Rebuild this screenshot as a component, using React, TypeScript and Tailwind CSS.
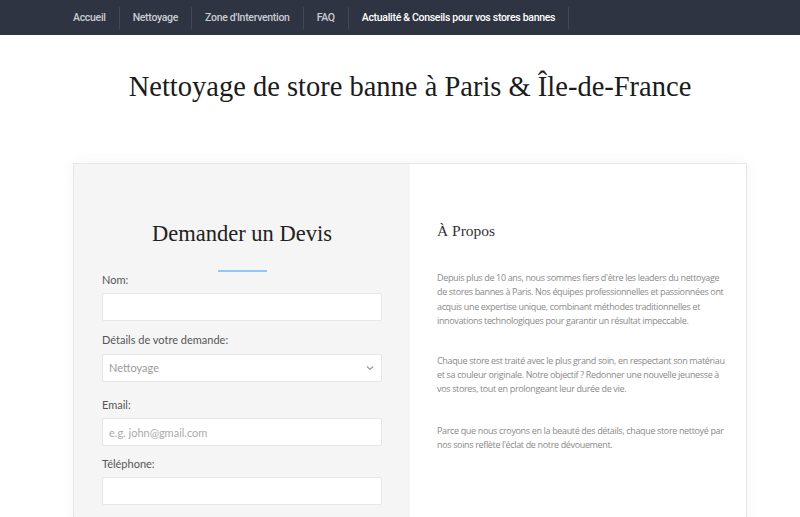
export default function App() {
  const nav = ["Accueil", "Nettoyage", "Zone d'Intervention", "FAQ", "Actualité & Conseils pour vos stores bannes"];
  const serif = "font-['Liberation_Serif',serif]";
  const sans = "font-['Lato',sans-serif]";
  const input =
    "w-full h-[28px] bg-white border border-[#e6e6e6] rounded-[2px] px-[6px] text-[11px] text-[#999] outline-none";

  return (
    <div className="min-h-[517px] bg-white">
      {/* Top nav */}
      <nav className="h-[35px] bg-[#2e3441] flex items-center pl-[60px] font-['Roboto',sans-serif] text-[10.5px] font-medium tracking-[-0.3px]">
        {nav.map((item, i) => (
          <div key={item} className="flex items-center h-[24px]">
            <span className={`px-[13px] ${i === nav.length - 1 ? "text-white" : "text-[#c9ccd2]"}`}>{item}</span>
            <span className="w-px h-[22px] bg-[#414755]" />
          </div>
        ))}
      </nav>

      <h1 className={`${serif} text-center text-[28.5px] text-[#1b1b1b] mt-[33px] leading-[38px] pl-[20px]`}>
        Nettoyage de store banne à Paris &amp; Île-de-France
      </h1>

      {/* Card */}
      <div className="mx-[73px] mt-[57px] w-[674px] border border-[#e8e8e8] shadow-[0_0_14px_rgba(0,0,0,0.05)] grid grid-cols-2">
        <div className="bg-[#f5f5f5] px-[28px] pt-[54px] pb-[20px]">
          <h2 className={`${serif} text-center text-[22.5px] text-[#222] leading-[32px]`}>Demander un Devis</h2>
          <div className="mx-auto mt-[20px] w-[49px] h-[2px] bg-[#8dcbf0]" />
          <form className={`${sans} text-[11px] text-[#555] mt-[1px]`}>
            <label className="block leading-[14px]">Nom:</label>
            <input className={`${input} mt-[6px]`} />
            <label className="block leading-[14px] mt-[12px]">Détails de votre demande:</label>
            <div className="relative mt-[7px]">
              <select className={`${input} appearance-none`} defaultValue="Nettoyage">
                <option>Nettoyage</option>
              </select>
              <svg className="absolute right-[8px] top-[11px] w-[8px] h-[6px]" viewBox="0 0 8 6" fill="none">
                <path d="M1 1.5 L4 4.5 L7 1.5" stroke="#999" strokeWidth="1.2" />
              </svg>
            </div>
            <label className="block leading-[14px] mt-[16px]">Email:</label>
            <input className={`${input} mt-[6px] placeholder:text-[#aaa]`} placeholder="e.g. john@gmail.com" />
            <label className="block leading-[14px] mt-[11px]">Téléphone:</label>
            <input className={`${input} mt-[6px]`} />
          </form>
        </div>
        <div className="bg-white pl-[27px] pr-[16px] pt-[56px]">
          <h3 className={`${serif} text-[15.5px] text-[#333] leading-[22px]`}>À Propos</h3>
          <div className="font-['Open_Sans',sans-serif] text-[9px] leading-[14.4px] text-[#8a8a8a] tracking-[-0.35px]">
            <p className="mt-[29px]">
              Depuis plus de 10 ans, nous sommes fiers d'être les leaders du nettoyage de stores bannes à Paris. Nos
              équipes professionnelles et passionnées ont acquis une expertise unique, combinant méthodes traditionnelles
              et innovations technologiques pour garantir un résultat impeccable.
            </p>
            <p className="mt-[25px]">
              Chaque store est traité avec le plus grand soin, en respectant son matériau et sa couleur originale. Notre
              objectif ? Redonner une nouvelle jeunesse à vos stores, tout en prolongeant leur durée de vie.
            </p>
            <p className="mt-[27px]">
              Parce que nous croyons en la beauté des détails, chaque store nettoyé par nos soins reflète l'éclat de
              notre dévouement.
            </p>
          </div>
        </div>
      </div>
    </div>
  );
}
